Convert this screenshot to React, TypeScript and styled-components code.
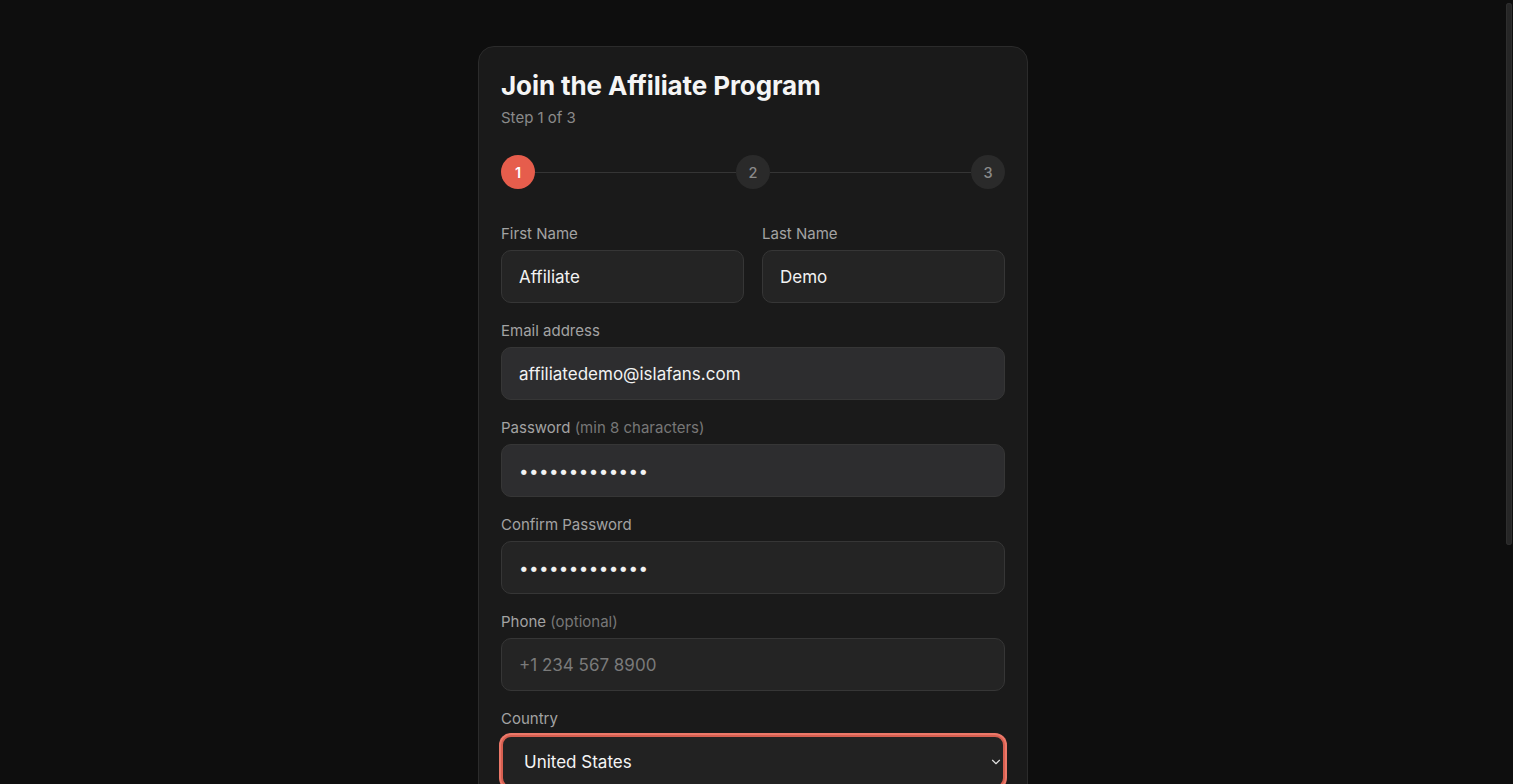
import React from "react";
import styled, { createGlobalStyle } from "styled-components";
import { ChevronDown } from "lucide-react";

const GlobalStyle = createGlobalStyle`
  html { background: #0e0e0e; color-scheme: dark; }
  body { margin: 0; background: #0e0e0e; font-family: Inter, "Noto Sans", sans-serif; color: #f2f2f2; }
  * { box-sizing: border-box; }
`;

const Page = styled.main`
  display: flex;
  justify-content: center;
  padding: 46px 7px 46px 0;
`;

const ScrollThumb = styled.div`
  position: fixed;
  top: 3px;
  right: 1px;
  width: 6px;
  height: 542px;
  border-radius: 3px;
  background: #262626;
  box-shadow: inset 0 0 0 1px #2e2e2e;
`;

const Card = styled.section`
  width: 550px;
  background: #1a1a1a;
  border: 1px solid #2b2b2b;
  border-radius: 16px;
  padding: 23px 22px 28px;
  display: flex;
  flex-direction: column;
`;

const Title = styled.h1`
  margin: 0;
  font-size: 26px;
  line-height: 31px;
  font-weight: 700;
  color: #f5f5f5;
  letter-spacing: -0.1px;
`;

const Subtitle = styled.p`
  margin: 7px 0 0;
  font-size: 15px;
  line-height: 20px;
  color: #8a8a8a;
`;

const Stepper = styled.div`
  display: flex;
  align-items: center;
  margin: 27px 0 35px;
`;

const StepDot = styled.div<{ $active?: boolean }>`
  width: 34px;
  height: 34px;
  border-radius: 50%;
  flex: none;
  display: flex;
  align-items: center;
  justify-content: center;
  font-size: 14.5px;
  font-weight: ${(p) => (p.$active ? 600 : 500)};
  background: ${(p) => (p.$active ? "#e65d4c" : "#2a2a2a")};
  color: ${(p) => (p.$active ? "#ffffff" : "#8a8a8a")};
`;

const StepLine = styled.div`
  flex: 1;
  height: 1px;
  background: #353535;
`;

const Form = styled.form`
  display: flex;
  flex-direction: column;
  gap: 18px;
`;

const Row = styled.div`
  display: grid;
  grid-template-columns: 1fr 1fr;
  gap: 18px;
`;

const Field = styled.div`
  display: flex;
  flex-direction: column;
  gap: 6px;
`;

const Label = styled.label`
  font-size: 15px;
  line-height: 20px;
  color: #a3a3a3;
`;

const Hint = styled.span`
  color: #777777;
`;

const Input = styled.input<{ $filled?: boolean }>`
  height: 53px;
  width: 100%;
  border-radius: 10px;
  border: 1px solid #363636;
  background: ${(p) => (p.$filled ? "#2d2d2f" : "#242424")};
  padding: 0 17px;
  font-family: Inter, "Noto Sans", sans-serif;
  font-size: 17px;
  color: #f2f2f2;
  outline: none;
  &::placeholder { color: #7a7a7a; }
  &[type="password"] { letter-spacing: 0.4px; }
`;

const SelectWrap = styled.div`
  position: relative;
`;

const Select = styled.select<{ $focused?: boolean }>`
  appearance: none;
  height: 53px;
  width: 100%;
  border-radius: 10px;
  background: #222222;
  padding: 0 21px;
  font-family: Inter, "Noto Sans", sans-serif;
  font-size: 17px;
  color: #f5f5f5;
  outline: none;
  border: ${(p) => (p.$focused ? "2px solid #d65f50" : "1px solid #363636")};
  box-shadow: ${(p) => (p.$focused ? "0 0 0 2px #ec7869" : "none")};
`;

const Chevron = styled.span`
  position: absolute;
  right: 2px;
  top: 50%;
  transform: translateY(-50%);
  display: flex;
  color: #e0e0e0;
  pointer-events: none;
`;

const CheckRow = styled.label`
  display: flex;
  align-items: center;
  gap: 10px;
  font-size: 14px;
  color: #a3a3a3;
  margin-top: 6px;
`;

const Check = styled.input`
  width: 16px;
  height: 16px;
  accent-color: #e65d4c;
  margin: 0;
`;

const Button = styled.button`
  height: 52px;
  border: none;
  border-radius: 10px;
  background: #e65d4c;
  color: #ffffff;
  font-family: Inter, "Noto Sans", sans-serif;
  font-size: 16px;
  font-weight: 600;
  margin-top: 8px;
`;

const Footer = styled.p`
  margin: 4px 0 0;
  text-align: center;
  font-size: 14px;
  color: #8a8a8a;
  a { color: #e65d4c; text-decoration: none; font-weight: 500; }
`;

export default function App() {
  return (
    <>
      <GlobalStyle />
      <Page>
        <Card>
          <Title>Join the Affiliate Program</Title>
          <Subtitle>Step 1 of 3</Subtitle>
          <Stepper>
            <StepDot $active>1</StepDot>
            <StepLine />
            <StepDot>2</StepDot>
            <StepLine />
            <StepDot>3</StepDot>
          </Stepper>
          <Form onSubmit={(e) => e.preventDefault()}>
            <Row>
              <Field>
                <Label>First Name</Label>
                <Input defaultValue="Affiliate" />
              </Field>
              <Field>
                <Label>Last Name</Label>
                <Input defaultValue="Demo" />
              </Field>
            </Row>
            <Field>
              <Label>Email address</Label>
              <Input $filled type="email" defaultValue="affiliatedemo@islafans.com" />
            </Field>
            <Field>
              <Label>
                Password <Hint>(min 8 characters)</Hint>
              </Label>
              <Input $filled type="password" defaultValue="affiliate1234" />
            </Field>
            <Field>
              <Label>Confirm Password</Label>
              <Input type="password" defaultValue="affiliate1234" />
            </Field>
            <Field>
              <Label>
                Phone <Hint>(optional)</Hint>
              </Label>
              <Input placeholder="+1 234 567 8900" />
            </Field>
            <Field>
              <Label>Country</Label>
              <SelectWrap>
                <Select $focused defaultValue="US">
                  <option value="US">United States</option>
                  <option value="CA">Canada</option>
                  <option value="GB">United Kingdom</option>
                </Select>
                <Chevron>
                  <ChevronDown size={14} strokeWidth={2} />
                </Chevron>
              </SelectWrap>
            </Field>
            <Field>
              <Label>
                Website or social profile <Hint>(optional)</Hint>
              </Label>
              <Input placeholder="https://" />
            </Field>
            <CheckRow>
              <Check type="checkbox" />
              I agree to the Affiliate Terms and Privacy Policy
            </CheckRow>
            <Button type="submit">Continue</Button>
            <Footer>
              Already an affiliate? <a href="#">Sign in</a>
            </Footer>
          </Form>
        </Card>
      </Page>
      <ScrollThumb />
    </>
  );
}
